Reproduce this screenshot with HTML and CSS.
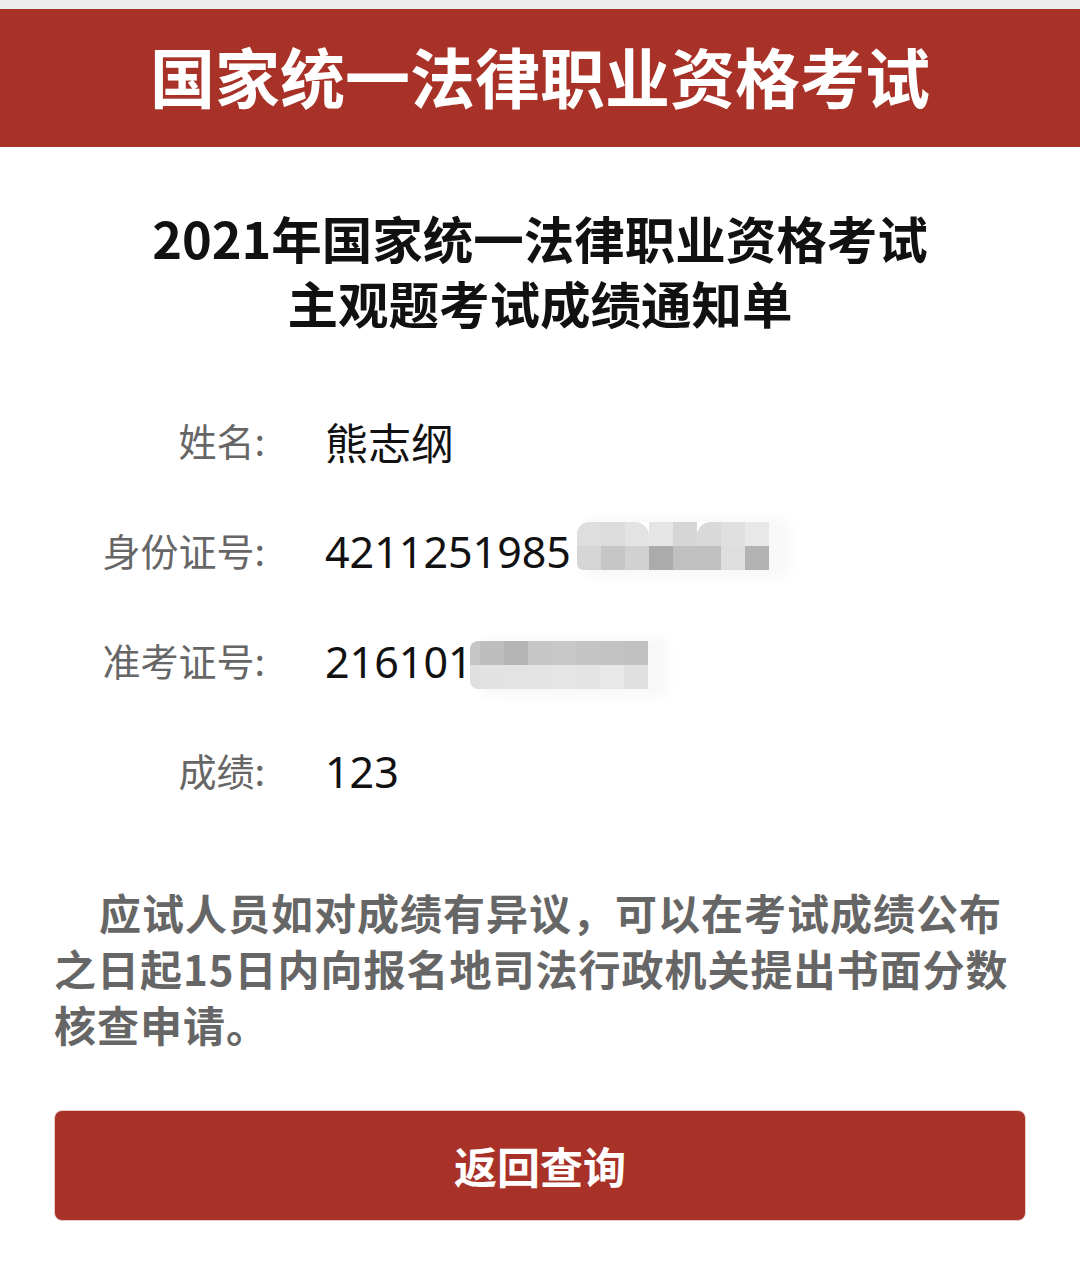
FILE: index.html
```html
<!DOCTYPE html>
<html lang="zh-CN">
<head>
<meta charset="utf-8">
<title>成绩通知单</title>
<link rel="stylesheet" href="styles.css">
</head>
<body>
<div class="statusline"></div>
<header class="banner">国家统一法律职业资格考试</header>
<main class="page">
  <h1 class="title"><span class="title-line">2021年国家统一法律职业资格考试</span><span class="title-line">主观题考试成绩通知单</span></h1>
  <dl class="info">
    <div class="row"><dt class="label">姓名:</dt><dd class="value">熊志纲</dd></div>
    <div class="row"><dt class="label">身份证号:</dt><dd class="value">4211251985<span class="mosaic id"><i class="c e1 cut1"></i><i class="c e2"></i><i class="c e3 cut2"></i><i class="c e4"></i><i class="c e5"></i><i class="c e6 cut3"></i><i class="c e7"></i><i class="c e8"></i><i class="c f1"></i><i class="c f2"></i><i class="c f3"></i><i class="c f4"></i><i class="c f5"></i><i class="c f5"></i><i class="c f6"></i><i class="c f7"></i></span></dd></div>
    <div class="row"><dt class="label">准考证号:</dt><dd class="value">216101<span class="mosaic exam"><i class="c g1"></i><i class="c g2"></i><i class="c g3"></i><i class="c g1"></i><i class="c g4"></i><i class="c g5"></i><i class="c g6"></i><i class="c g7"></i><i class="c h1"></i><i class="c h2"></i><i class="c h3"></i><i class="c h4"></i><i class="c h5"></i><i class="c h3"></i><i class="c h6"></i><i class="c h1"></i></span></dd></div>
    <div class="row"><dt class="label">成绩:</dt><dd class="value">123</dd></div>
  </dl>
  <p class="notice">应试人员如对成绩有异议，可以在考试成绩公布之日起15日内向报名地司法行政机关提出书面分数核查申请。</p>
  <button class="back" type="button">返回查询</button>
</main>
</body>
</html>
```

FILE: styles.css
```css
html, body {
  margin: 0;
  padding: 0;
  background: #ffffff;
}
body {
  width: 1080px;
  height: 1288px;
  overflow: hidden;
  font-family: "Noto Sans", "Noto Sans CJK SC", sans-serif;
}
.statusline {
  height: 9px;
  background: #ececec;
}
.banner {
  height: 138px;
  background: #a83228;
  color: #ffffff;
  font-family: "Noto Sans CJK SC", sans-serif;
  font-weight: 700;
  font-size: 65px;
  display: flex;
  align-items: center;
  justify-content: center;
  padding-bottom: 6px;
  box-sizing: border-box;
}
.page {
  padding: 0 54px;
}
.title {
  margin: 0;
  padding-top: 58px;
  text-align: center;
  font-family: "Noto Sans CJK SC", sans-serif;
  font-weight: 700;
  font-size: 50.5px;
  color: #111111;
  display: flex;
  flex-direction: column;
  align-items: center;
}
.title-line {
  display: block;
  height: 65px;
  line-height: 65px;
}
.info {
  margin: 51px 0 0 0;
  padding: 0;
}
.row {
  display: grid;
  grid-template-columns: 211px 1fr;
  column-gap: 60px;
  height: 110px;
  align-items: center;
}
.label {
  margin: 0;
  text-align: right;
  color: #666666;
  font-family: "Noto Sans CJK SC", sans-serif;
  font-size: 38px;
  margin-top: -3px;
}
.value {
  margin: 0;
  color: #111111;
  font-size: 43px;
  display: flex;
  align-items: center;
  white-space: nowrap;
}
.mosaic {
  display: inline-grid;
  grid-template-columns: repeat(8, 24px);
  grid-template-rows: 24px 24px;
  box-shadow: 14px 2px 12px 6px #f8f8f8;
}
.mosaic.id {
  margin-left: 6px;
  margin-top: -10px;
}
.mosaic.exam {
  grid-template-columns: 10px repeat(7, 24px);
  margin-left: -3px;
  margin-top: 8px;
  border-radius: 8px 0 0 8px;
  overflow: hidden;
}
.c { display: block; }
.cut1 { border-top-left-radius: 12px; }
.cut2 { border-top-right-radius: 14px; }
.cut3 { border-top-left-radius: 14px; }
.e1 { background: #dedede; }
.e2 { background: #dcdcdc; }
.e3 { background: #e3e3e3; }
.e4 { background: #e5e5e5; }
.e5 { background: #d6d6d6; }
.e6 { background: #d9d9d9; }
.e7 { background: #e0e0e0; }
.e8 { background: #e8e8e8; }
.f1 { background: #d5d5d5; border-bottom-left-radius: 6px; }
.f2 { background: #c6c6c6; }
.f3 { background: #d1d1d1; }
.f4 { background: #ababab; }
.f5 { background: #c0c0c0; }
.f6 { background: #dedede; }
.f7 { background: #b3b3b3; }
.g1 { background: #c6c6c6; }
.g2 { background: #bebebe; }
.g3 { background: #b5b5b5; }
.g4 { background: #c8c8c8; }
.g5 { background: #c5c5c5; }
.g6 { background: #c3c3c3; }
.g7 { background: #c1c1c1; }
.h1 { background: #e0e0e0; }
.h2 { background: #e2e2e2; }
.h3 { background: #e3e3e3; }
.h4 { background: #e4e4e4; }
.h5 { background: #e6e6e6; }
.h6 { background: #e8e8e8; }
.notice {
  margin: 58px -2px 0 0;
  color: #666666;
  font-family: "Noto Sans CJK SC", sans-serif;
  font-weight: 700;
  font-size: 42px;
  letter-spacing: 1px;
  line-height: 56px;
  text-indent: 45px;
}
.back {
  display: block;
  width: 100%;
  height: 111px;
  margin-top: 58px;
  background: #a83228;
  border: 1px solid #e6cccc;
  border-radius: 8px;
  color: #ffffff;
  font-family: "Noto Sans CJK SC", sans-serif;
  font-weight: 700;
  font-size: 43px;
  padding: 0 0 2px 0;
}
```
